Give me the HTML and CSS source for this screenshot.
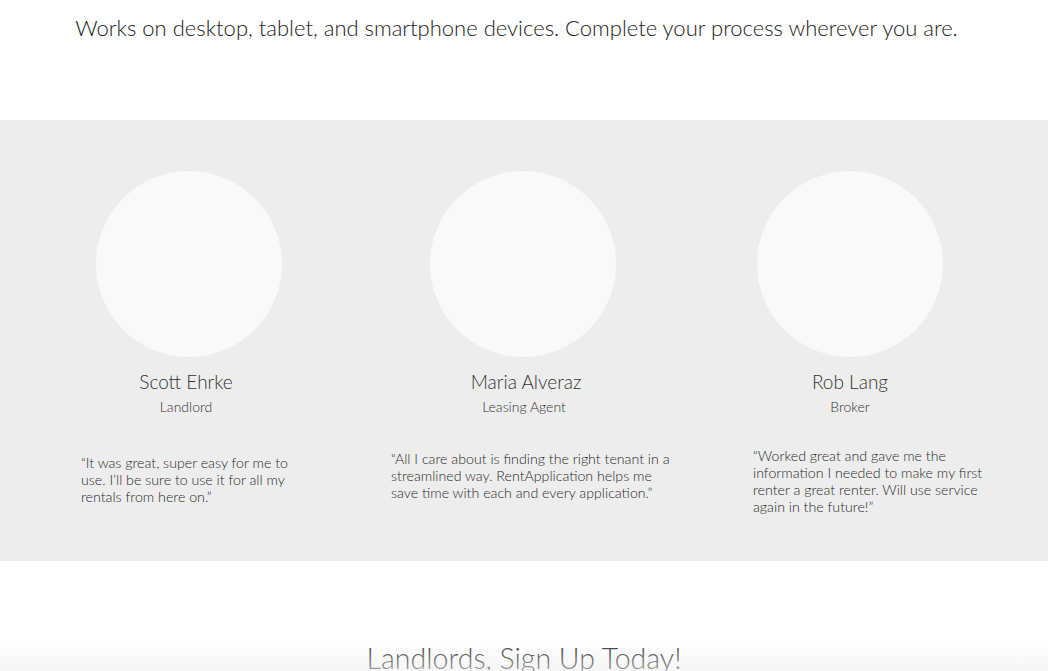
FILE: index.html
```html
<!DOCTYPE html>
<html>
<head>
<meta charset="utf-8">
<link rel="stylesheet" href="styles.css">
</head>
<body>
<section class="intro">
  <p class="intro-text">Works on desktop, tablet, and smartphone devices. Complete your process wherever you are.</p>
</section>
<section class="testimonials">
  <div class="col col-1">
    <div class="avatar"></div>
    <h3 class="name">Scott Ehrke</h3>
    <p class="role">Landlord</p>
    <p class="quote q1">“It was great, super easy for me to use. I’ll be sure to use it for all my rentals from here on.”</p>
  </div>
  <div class="col col-2">
    <div class="avatar"></div>
    <h3 class="name">Maria Alveraz</h3>
    <p class="role">Leasing Agent</p>
    <p class="quote q2">“All I care about is finding the right tenant in a streamlined way. RentApplication helps me save time with each and every application.”</p>
  </div>
  <div class="col col-3">
    <div class="avatar"></div>
    <h3 class="name">Rob Lang</h3>
    <p class="role">Broker</p>
    <p class="quote q3">“Worked great and gave me the information I needed to make my first renter a great renter. Will use service again in the future!”</p>
  </div>
</section>
<section class="signup">
  <h2 class="signup-title">Landlords, Sign Up Today!</h2>
</section>
<div class="bottom-fade"></div>
</body>
</html>
```
FILE: styles.css
```css
html, body {
  margin: 0;
  padding: 0;
  background: #ffffff;
  font-family: "Lato", "Liberation Sans", sans-serif;
  color: #333;
  overflow: hidden;
}

.intro {
  height: 120px;
  padding-right: 15px;
  box-sizing: border-box;
}

.intro-text {
  margin: 0;
  padding-top: 13px;
  text-align: center;
  font-size: 22px;
  font-weight: 300;
  line-height: 30px;
  color: #222;
}

.testimonials {
  background: #ededed;
  height: 441px;
  box-sizing: border-box;
  padding-top: 51px;
  display: grid;
  grid-template-columns: 16px 340px 336px 316px 40px;
}

.col {
  display: flex;
  flex-direction: column;
  align-items: center;
}

.col-1 { grid-column: 2; }
.col-2 { grid-column: 3; }
.col-3 { grid-column: 4; }

.avatar {
  width: 186px;
  height: 186px;
  border-radius: 50%;
  background: #f9f9f9;
}

.col-1 .avatar { margin-left: 5px; }
.col-2 .avatar { margin-left: -2px; }

.name {
  margin: 14px 0 0;
  font-size: 19px;
  font-weight: 300;
  line-height: 22px;
  color: #333;
}

.col-2 .name { margin-left: 4px; }

.role {
  margin: 5px 0 0;
  font-size: 14px;
  font-weight: 300;
  line-height: 18px;
  color: #333;
}

.quote {
  align-self: flex-start;
  margin: 0;
  font-size: 14.2px;
  font-weight: 300;
  line-height: 17px;
  color: #2a2a2a;
}

.q1 { margin-top: 38px; margin-left: 65px; width: 222px; }
.q2 { margin-top: 34px; margin-left: 35px; width: 285px; }
.q3 { margin-top: 31px; margin-left: 61px; width: 240px; }

.signup {
  padding-top: 80px;
  text-align: center;
}

.signup-title {
  margin: 0;
  font-size: 28.5px;
  font-weight: 300;
  line-height: 34px;
  color: #222;
}

.bottom-fade {
  position: fixed;
  left: 0;
  right: 0;
  bottom: 0;
  height: 34px;
  background: linear-gradient(to bottom, rgba(240,240,240,0), rgba(240,240,240,0.6));
  pointer-events: none;
}
```
